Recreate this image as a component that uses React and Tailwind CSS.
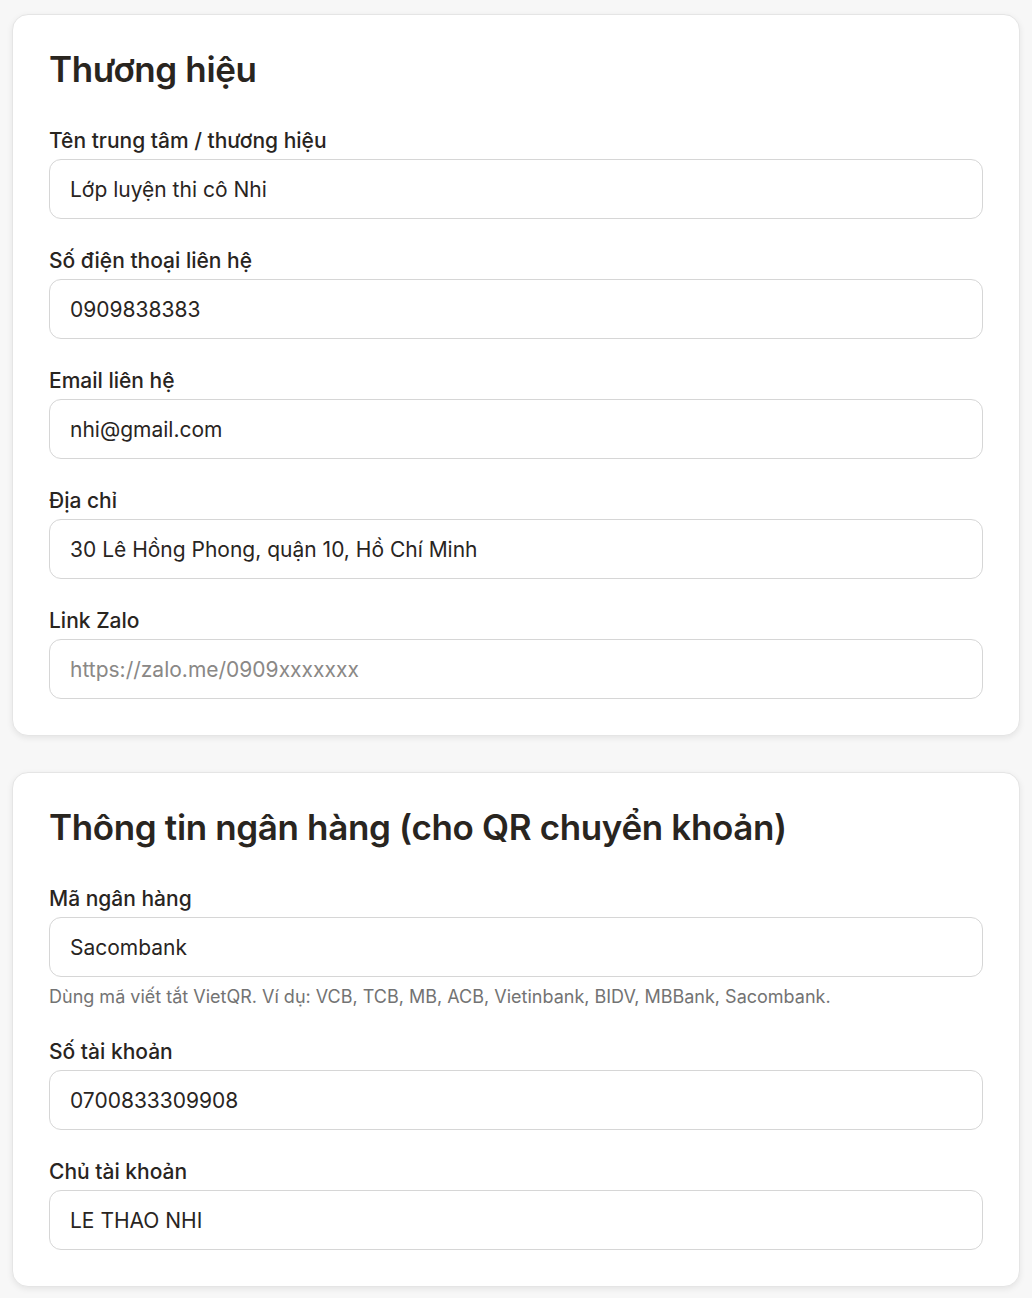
import { useState } from "react";

function Field({ label, value, placeholder, hint, onChange }) {
  return (
    <div>
      <label className="block text-[21px] leading-7 font-medium text-[#29251f] mb-1">{label}</label>
      <input
        value={value}
        placeholder={placeholder}
        onChange={(e) => onChange(e.target.value)}
        className="w-full h-[60px] px-5 rounded-xl border border-[#d6d6d6] bg-white text-[21px] text-[#29251f] placeholder:text-[#8a8886] outline-none"
      />
      {hint && <p className="mt-[7px] text-[18px] leading-[26px] text-[#737373]">{hint}</p>}
    </div>
  );
}

function Card({ title, children }) {
  return (
    <section className="bg-white border border-[#e5e5e5] rounded-2xl shadow-[0_2px_6px_rgba(0,0,0,0.08)] px-9 pt-[34px] pb-9">
      <h2 className="text-[35px] leading-10 font-semibold tracking-[-0.01em] text-[#29251f] mb-[38px]">{title}</h2>
      <div className="space-y-7">{children}</div>
    </section>
  );
}

export default function App() {
  const [form, setForm] = useState({
    name: "Lớp luyện thi cô Nhi",
    phone: "0909838383",
    email: "nhi@gmail.com",
    address: "30 Lê Hồng Phong, quận 10, Hồ Chí Minh",
    zalo: "",
    bank: "Sacombank",
    account: "0700833309908",
    owner: "LE THAO NHI",
  });
  const set = (k) => (v) => setForm({ ...form, [k]: v });

  return (
    <div className="min-h-screen bg-[#f7f7f7] px-3 pt-[14px] pb-3 font-['Inter',sans-serif]">
      <div className="space-y-9">
        <Card title="Thương hiệu">
          <Field label="Tên trung tâm / thương hiệu" value={form.name} onChange={set("name")} />
          <Field label="Số điện thoại liên hệ" value={form.phone} onChange={set("phone")} />
          <Field label="Email liên hệ" value={form.email} onChange={set("email")} />
          <Field label="Địa chỉ" value={form.address} onChange={set("address")} />
          <Field label="Link Zalo" value={form.zalo} placeholder="https://zalo.me/0909xxxxxxx" onChange={set("zalo")} />
        </Card>
        <Card title="Thông tin ngân hàng (cho QR chuyển khoản)">
          <Field
            label="Mã ngân hàng"
            value={form.bank}
            onChange={set("bank")}
            hint="Dùng mã viết tắt VietQR. Ví dụ: VCB, TCB, MB, ACB, Vietinbank, BIDV, MBBank, Sacombank."
          />
          <Field label="Số tài khoản" value={form.account} onChange={set("account")} />
          <Field label="Chủ tài khoản" value={form.owner} onChange={set("owner")} />
        </Card>
      </div>
    </div>
  );
}
